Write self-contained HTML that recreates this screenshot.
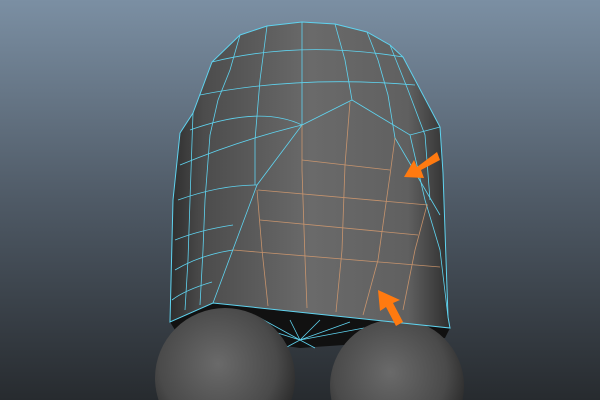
<!DOCTYPE html>
<html><head><style>html,body{margin:0;padding:0;width:600px;height:400px;overflow:hidden}svg{display:block}</style></head>
<body>
<svg width="600" height="400" viewBox="0 0 600 400" xmlns="http://www.w3.org/2000/svg">
<defs>
<linearGradient id="bg" x1="0" y1="0" x2="0" y2="1">
<stop offset="0" stop-color="#7b8fa3"/><stop offset="0.5" stop-color="#4f5a66"/><stop offset="1" stop-color="#272b2f"/></linearGradient>
<linearGradient id="body" x1="0" y1="0" x2="1" y2="0">
<stop offset="0" stop-color="#2e2e2e"/><stop offset="0.12" stop-color="#4c4c4c"/><stop offset="0.5" stop-color="#6a6a6a"/><stop offset="0.85" stop-color="#606060"/><stop offset="1" stop-color="#2e2e2e"/></linearGradient>
<radialGradient id="sph" cx="0.45" cy="0.4" r="0.6">
<stop offset="0" stop-color="#6a6a6a"/><stop offset="0.7" stop-color="#4a4a4a"/><stop offset="1" stop-color="#2a2a2a"/></radialGradient>
</defs>
<rect width="600" height="400" fill="url(#bg)"/>
<polygon points="170,322 213,303 448,317 450,328 445,338 300,348 175,330" fill="#111"/>
<g stroke="#5fd3ef" stroke-width="0.8" fill="none">
<path d="M300,340 L230,318 M300,340 L260,318 M300,340 L290,320 M300,340 L320,320 M300,340 L350,322 M300,340 L380,325 M300,340 L285,348 M300,340 L315,348"/>
</g>
<circle cx="225" cy="378" r="70" fill="url(#sph)"/>
<circle cx="397" cy="386" r="67" fill="url(#sph)"/>
<polygon points="240,35 267,26 302,22 335,24 367,32 390,45 403,57 440,127 443,173 448,317 450,328 213,303 170,322 173,200 180,133 193,113 212,62" fill="url(#body)" stroke="#5fd3ef" stroke-width="1"/>
<g stroke="#5fd3ef" stroke-width="0.8" fill="none">
<path d="M212,62 Q300,40 403,57"/>
<path d="M200,95 Q300,75 415,85"/>
<path d="M190,130 Q260,105 302,125 L352,100 L410,135 L440,127"/>
<path d="M180,165 Q240,140 302,125"/>
<path d="M178,200 Q220,185 257,185"/>
<path d="M175,240 Q200,230 233,225 M175,270 Q200,255 233,250"/>
<path d="M172,300 Q185,290 212,282"/>
<path d="M302,22 L302,125 L257,185 L213,303"/>
<path d="M267,26 L260,80 L255,140 L255,185"/>
<path d="M240,35 L230,70 L218,100 L210,135 L205,200 L203,250 L200,305"/>
<path d="M335,24 L345,60 L352,100"/>
<path d="M367,32 L378,60 L388,95 L395,138 L440,215"/>
<path d="M390,45 L408,90 L425,135 L430,200"/>
<path d="M193,113 L190,200 L188,260 L185,310"/>
<path d="M410,135 L425,200 L440,250 L448,317"/>
</g>
<g stroke="#e0a070" stroke-width="0.8" fill="none" opacity="0.8">
<path d="M302,125 L302,170 L305,258 L307,308"/>
<path d="M350,102 L345,165 L342,250 L336,312"/>
<path d="M395,138 L390,175 L378,260 L363,315"/>
<path d="M427,205 L415,250 L403,310"/>
<path d="M257,190 L262,250 L268,306"/>
<path d="M302,160 L390,170"/>
<path d="M258,190 L428,205"/>
<path d="M260,220 L418,235"/>
<path d="M233,250 L440,267"/>
</g>
<polygon points="437,152 440,160 421,170 424,178 404,177 414,160 417,167" fill="#ff7a10"/>
<polygon points="378,290 400,300 393,303 403,322 396,326 386,307 380,311" fill="#ff7a10"/>
</svg>
</body></html>
